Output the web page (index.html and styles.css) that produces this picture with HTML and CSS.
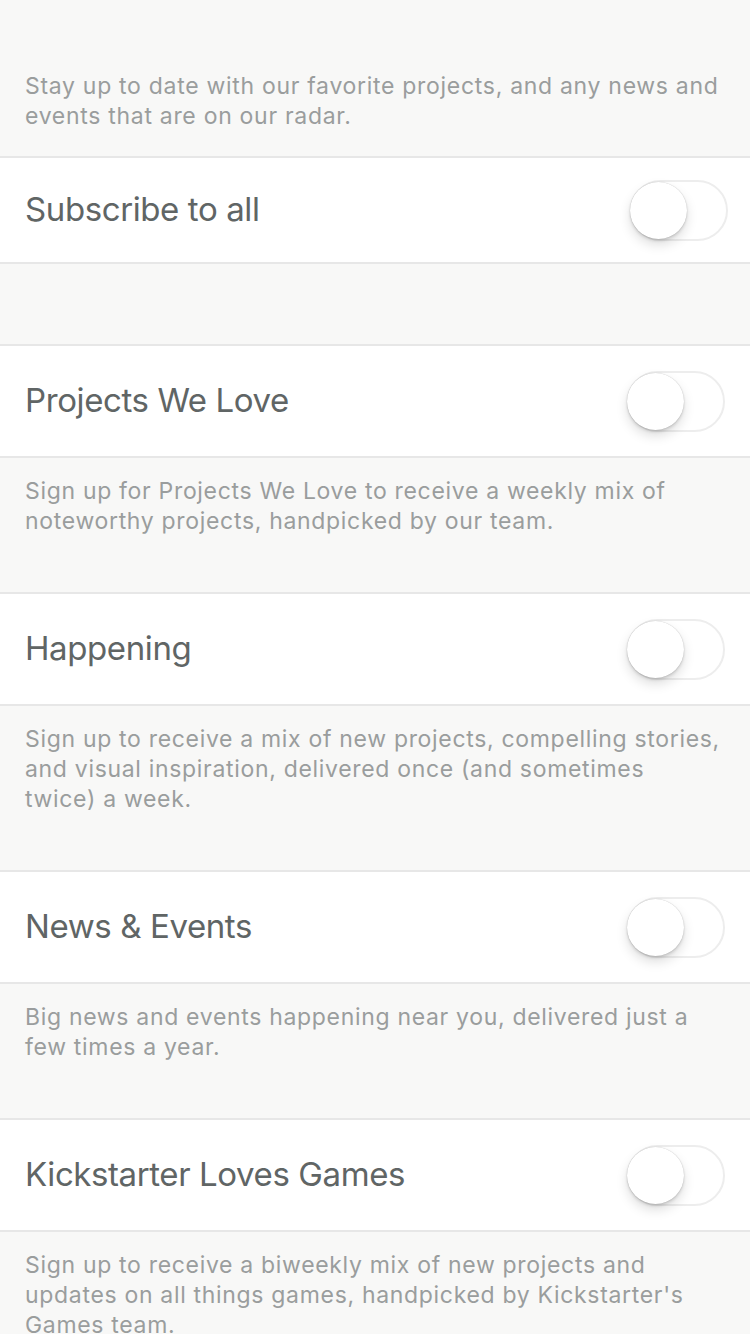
FILE: index.html
```html
<!DOCTYPE html>
<html>
<head>
<meta charset="utf-8">
<link rel="stylesheet" href="styles.css">
</head>
<body>
<div class="page">
  <div class="intro">Stay up to date with our favorite projects, and any news and events that are on our radar.</div>
  <div class="row row-sub">
    <span class="title">Subscribe to all</span>
    <span class="toggle"><span class="knob"></span></span>
  </div>
  <div class="gap"></div>
  <div class="row">
    <span class="title">Projects We Love</span>
    <span class="toggle"><span class="knob"></span></span>
  </div>
  <div class="desc">Sign up for Projects We Love to receive a weekly mix of noteworthy projects, handpicked by our team.</div>
  <div class="row">
    <span class="title">Happening</span>
    <span class="toggle"><span class="knob"></span></span>
  </div>
  <div class="desc">Sign up to receive a mix of new projects, compelling stories, and visual inspiration, delivered once (and sometimes twice) a week.</div>
  <div class="row">
    <span class="title">News &amp; Events</span>
    <span class="toggle"><span class="knob"></span></span>
  </div>
  <div class="desc">Big news and events happening near you, delivered just a few times a year.</div>
  <div class="row">
    <span class="title">Kickstarter Loves Games</span>
    <span class="toggle"><span class="knob"></span></span>
  </div>
  <div class="desc">Sign up to receive a biweekly mix of new projects and updates on all things games, handpicked by Kickstarter's Games team.</div>
</div>
</body>
</html>
```
FILE: styles.css
```css
html, body {
  margin: 0;
  padding: 0;
  background: #f8f8f7;
  height: 1334px;
  overflow: hidden;
}
.page {
  width: 750px;
  font-family: Inter, "Liberation Sans", Arial, sans-serif;
}
.intro {
  padding: 71px 18px 26px 25px;
  font-size: 23px;
  letter-spacing: 0.7px;
  line-height: 30px;
  color: #9a9d9d;
  height: 59px;
  box-sizing: content-box;
}
.row {
  background: #fff;
  border-top: 2px solid #e7e7e7;
  border-bottom: 2px solid #e7e7e7;
  height: 110px;
  display: flex;
  align-items: center;
  justify-content: space-between;
  padding: 0 25px 0 25px;
}
.row-sub {
  height: 104px;
  padding-right: 22px;
}
.title {
  font-size: 33px;
  letter-spacing: -0.4px;
  color: #606565;
  margin-top: -3px;
}
.gap {
  height: 80px;
}
.desc {
  padding: 18px 28px 56px 25px;
  font-size: 23px;
  letter-spacing: 0.68px;
  line-height: 30px;
  color: #9a9d9d;
}
.toggle {
  width: 98px;
  height: 61px;
  box-sizing: border-box;
  border: 2px solid #ededed;
  border-radius: 31px;
  background: #fff;
  position: relative;
  flex: none;
}
.knob {
  position: absolute;
  left: -2px;
  top: 0px;
  width: 57px;
  height: 57px;
  border-radius: 50%;
  background: #fff;
  box-shadow: 0 6px 12px rgba(0,0,0,0.13), 0 2px 3px rgba(0,0,0,0.12), 0 0 1px rgba(0,0,0,0.25);
}
```
